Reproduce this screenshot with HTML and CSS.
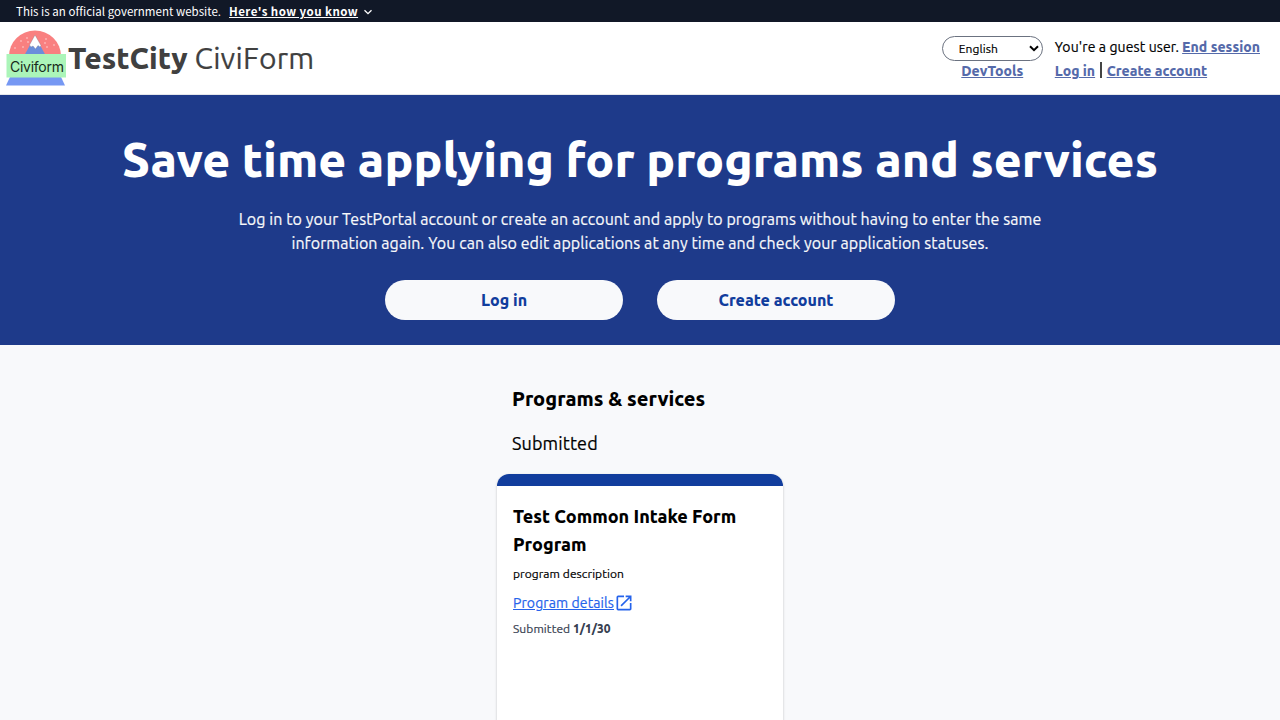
FILE: index.html
```html
<!DOCTYPE html>
<html lang="en">
<head>
<meta charset="utf-8">
<title>TestCity CiviForm</title>
<link rel="stylesheet" href="styles.css">
</head>
<body>
<div class="gov-banner"><span class="gov-text">This is an official government website.</span><a class="gov-link" href="#">Here's how you know</a><svg class="chevron" viewBox="0 0 10 10"><path d="M1.5 3.2 5 6.700 8.500 3.200"/></svg></div>
<header class="site-header">
  <div class="brand">
    <svg class="logo" viewBox="0 0 62 58">
      <path class="logo-sky" d="M3 26a26 25.500 0 0 1 52 0z"/>
      <path class="logo-mountain" d="M18 26 29 6l11 20z"/>
      <path class="logo-snow" d="M23.500 15 29 5l6 10.500-1 1.500-2-1.500-2.500 3.500-2.500-3-2 1z"/>
      <g class="logo-flakes"><circle cx="21" cy="8" r=".8"/><circle cx="15" cy="11" r=".8"/><circle cx="22" cy="12" r=".8"/><circle cx="17" cy="17" r=".8"/><circle cx="9" cy="18" r=".8"/><circle cx="40" cy="9" r=".8"/><circle cx="48" cy="15" r=".8"/><circle cx="41" cy="17" r=".8"/><circle cx="39" cy="13" r=".8"/></g>
      <path class="logo-base" d="M4 47h51l4 8.500H0z"/>
      <path class="logo-band" d="M.5 24h59.500v23.500H.5z"/>
      <text class="logo-name" x="4" y="41.500" textLength="54">Civiform</text>
    </svg>
    <div class="brand-name"><b class="brand-city">TestCity</b> <span class="brand-app">CiviForm</span></div>
  </div>
  <div class="account">
    <div class="tools">
      <div class="language"><span>English</span><svg class="caret" viewBox="0 0 10 7"><path d="M1 1.200 5 5.200 9 1.200"/></svg></div>
      <a class="link dev" href="#">DevTools</a>
    </div>
    <div class="session">
      <div class="session-row"><span class="guest">You're a guest user.</span><a class="link end" href="#">End session</a></div>
      <div class="session-row"><a class="link" href="#">Log in</a><span class="divider"></span><a class="link" href="#">Create account</a></div>
    </div>
  </div>
</header>
<section class="hero">
  <h1>Save time applying for programs and services</h1>
  <p>Log in to your TestPortal account or create an account and apply to programs without having to enter the same<br>information again. You can also edit applications at any time and check your application statuses.</p>
  <div class="actions"><a class="pill" href="#">Log in</a><a class="pill" href="#">Create account</a></div>
</section>
<main class="programs">
  <h2>Programs &amp; services</h2>
  <h3>Submitted</h3>
  <article class="card">
    <div class="card-bar"></div>
    <div class="card-body">
      <h4>Test Common Intake Form<br>Program</h4>
      <p class="description">program description</p>
      <a class="details" href="#"><span>Program details</span><svg class="external" viewBox="0 0 24 24"><path d="M19 19H5V5h7V3H5a2 2 0 0 0-2 2v14a2 2 0 0 0 2 2h14c1.100 0 2-.9 2-2v-7h-2v7zM14 3v2h3.590l-9.830 9.830 1.410 1.410L19 6.410V10h2V3h-7z"/></svg></a>
      <p class="status">Submitted <b>1/1/30</b></p>
    </div>
  </article>
</main>
</body>
</html>
```
FILE: styles.css
```css
* { box-sizing: border-box; }
body { height: 720px; margin: 0; overflow: hidden; background: #f8f9fb; color: #000; font-family: Ubuntu, "Noto Sans", sans-serif; font-size: 16px; line-height: 24px; }
h1, h2, h3, h4, p { margin: 0; }
h1, h2, h4, b { font-weight: 800; }
.brand-app, .language, .guest, .hero p, h3, .description, .details, .status { -webkit-text-stroke: .2px currentColor; }
.status b { -webkit-text-stroke: 0; letter-spacing: 0; }
.gov-banner { display: flex; align-items: center; height: 22px; padding-left: 16px; background: #111827; color: #fff; font-family: "Noto Sans CJK SC", sans-serif; font-size: 11.5px; line-height: 22px; white-space: nowrap; }
.gov-text { letter-spacing: .027px; }
.gov-link { margin-left: 8px; color: #fff; font-weight: 700; letter-spacing: .436px; }
.chevron { width: 10px; height: 10px; margin: 1px 0 0 5px; fill: none; stroke: #fff; stroke-width: 1.3; }
.site-header { display: flex; justify-content: space-between; height: 73px; border-bottom: 1px solid #e5e7eb; background: #fff; }
.brand { display: flex; padding: 8px 0 0 6px; white-space: nowrap; }
.logo { width: 62px; height: 58px; }
.logo-sky { fill: #f98080; }
.logo-mountain { fill: #6b8edb; }
.logo-snow { fill: #fff; stroke: #6b6b7b; stroke-width: .3; }
.logo-flakes { fill: #fcd3d3; }
.logo-base { fill: #7698f3; }
.logo-band { fill: #abf5b9; }
.logo-name { fill: #182b1b; font: 14px Inter, sans-serif; }
.brand-name { padding-top: 10px; color: #404040; font-size: 30px; line-height: 36px; }
.brand-app { letter-spacing: .2px; }
.account { display: flex; gap: 12px; padding: 13px 20px 0 0; font-size: 14px; white-space: nowrap; }
.tools { display: flex; flex-direction: column; align-items: center; width: 101px; padding-top: 1px; }
.language { display: flex; align-items: center; justify-content: space-between; width: 101px; height: 25px; padding: 0 3px 0 16px; border: 1px solid #6b7280; border-radius: 13px; font-size: 12px; letter-spacing: .1px; }
.caret { width: 10px; height: 7px; fill: none; stroke: #000; stroke-width: 2; }
.link { color: #556aaa; font-weight: 800; }
.dev { line-height: 20px; }
.session-row { display: flex; height: 24px; }
.guest { letter-spacing: .11px; }
.end { margin-left: 3px; }
.divider { width: 1.5px; height: 16px; margin: 3px 5px 0; background: #444; }
.hero { height: 250px; padding-top: 40px; background: #1e3a8a; color: #f8f9fb; text-align: center; }
.hero h1 { font-size: 48px; line-height: 48px; color: #fff; white-space: nowrap; }
.hero p { margin-top: 24px; font-size: 16px; line-height: 24px; letter-spacing: .08px; white-space: nowrap; }
.actions { display: flex; justify-content: center; gap: 34px; margin-top: 25px; }
.pill { width: 238px; height: 40px; border-radius: 20px; background: #f8f9fb; color: #113d9d; font-size: 16px; font-weight: 800; line-height: 40px; text-decoration: none; }
.programs { width: 286px; margin: 0 auto; padding-top: 40px; white-space: nowrap; }
.programs h2 { padding-left: 15px; font-size: 20px; line-height: 28px; }
.programs h3 { margin-top: 16px; padding-left: 15px; font-size: 18px; font-weight: 400; line-height: 28px; letter-spacing: .12px; }
.card { height: 320px; margin-top: 17px; overflow: hidden; border-radius: 12px; background: #fff; box-shadow: 0 1px 3px rgba(0,0,0,.16), 0 1px 2px rgba(0,0,0,.08); }
.card-bar { height: 12px; background: #113d9d; }
.card-body { padding: 16px; }
.card h4 { font-size: 18px; line-height: 28px; }
.description { margin-top: 8px; font-size: 12px; line-height: 16px; letter-spacing: .067px; }
.details { display: flex; align-items: center; height: 20px; margin-top: 11px; color: #2563eb; font-size: 14px; line-height: 20px; letter-spacing: .105px; }
.external { width: 20px; height: 20px; fill: currentColor; }
.status { margin-top: 8px; color: #374151; font-size: 12px; line-height: 16px; letter-spacing: .08px; }
```
